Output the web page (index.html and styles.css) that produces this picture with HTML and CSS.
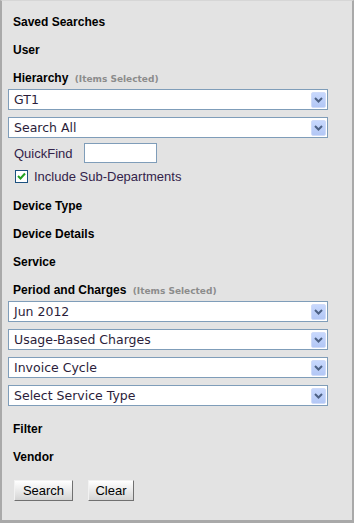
FILE: index.html
```html
<!DOCTYPE html>
<html lang="en">
<head>
    <meta charset="UTF-8">
    <title>Search Panel</title>
    <link rel="stylesheet" href="styles.css">
</head>
<body>
    <div class="panel">
        <div class="hd">Saved Searches</div>
        <div class="hd">User</div>
        <div class="hd">Hierarchy <span class="note">(Items Selected)</span></div>
        <div class="combo first"><span>GT1</span><span class="arrow"><svg width="9" height="6" viewBox="0 0 9 6"><path d="M1 1 L4.5 4.5 L8 1" fill="none" stroke="#4d6185" stroke-width="2"/></svg></span></div>
        <div class="combo"><span>Search All</span><span class="arrow"><svg width="9" height="6" viewBox="0 0 9 6"><path d="M1 1 L4.5 4.5 L8 1" fill="none" stroke="#4d6185" stroke-width="2"/></svg></span></div>
        <div class="quick">
            <label>QuickFind</label>
            <span class="textbox"></span>
        </div>
        <div class="check">
            <span class="box"><svg width="11" height="11" viewBox="0 0 11 11"><path d="M2 5 L4.5 7.5 L9 2.5" fill="none" stroke="#21a121" stroke-width="2"/></svg></span>
            <label>Include Sub-Departments</label>
        </div>
        <div class="hd gap">Device Type</div>
        <div class="hd">Device Details</div>
        <div class="hd">Service</div>
        <div class="hd">Period and Charges <span class="note">(Items Selected)</span></div>
        <div class="combo first"><span>Jun 2012</span><span class="arrow"><svg width="9" height="6" viewBox="0 0 9 6"><path d="M1 1 L4.5 4.5 L8 1" fill="none" stroke="#4d6185" stroke-width="2"/></svg></span></div>
        <div class="combo"><span>Usage-Based Charges</span><span class="arrow"><svg width="9" height="6" viewBox="0 0 9 6"><path d="M1 1 L4.5 4.5 L8 1" fill="none" stroke="#4d6185" stroke-width="2"/></svg></span></div>
        <div class="combo"><span>Invoice Cycle</span><span class="arrow"><svg width="9" height="6" viewBox="0 0 9 6"><path d="M1 1 L4.5 4.5 L8 1" fill="none" stroke="#4d6185" stroke-width="2"/></svg></span></div>
        <div class="combo"><span>Select Service Type</span><span class="arrow"><svg width="9" height="6" viewBox="0 0 9 6"><path d="M1 1 L4.5 4.5 L8 1" fill="none" stroke="#4d6185" stroke-width="2"/></svg></span></div>
        <div class="hd gap">Filter</div>
        <div class="hd">Vendor</div>
        <div class="buttons">
            <button class="btn search">Search</button>
            <button class="btn clear">Clear</button>
        </div>
    </div>
</body>
</html>
```

FILE: styles.css
```css
html, body {
    margin: 0;
    padding: 0;
}
body {
    font-family: "Liberation Sans", Arial, sans-serif;
    background-color: #e3e3e3;
}
.panel {
    box-sizing: border-box;
    width: 354px;
    height: 523px;
    background-color: #e3e3e3;
    border: 2px solid #a9a9a9;
    border-top: 1px solid #d6d6d6;
    border-bottom-width: 3px;
    padding: 13px 0 0 6px;
}
.hd {
    font-size: 12px;
    font-weight: bold;
    line-height: 16px;
    height: 16px;
    color: #000;
    padding-left: 5px;
    margin-top: 12px;
}
.hd:first-child {
    margin-top: 0;
}
.hd.gap {
    margin-top: 15px;
}
.note {
    font-family: "DejaVu Sans", Verdana, sans-serif;
    font-size: 9px;
    color: #8c8c8c;
    margin-left: 3px;
}
.combo {
    box-sizing: border-box;
    width: 320px;
    height: 21px;
    margin-top: 7px;
    background: #fff;
    border: 1px solid #7f9db9;
    display: flex;
    align-items: center;
    justify-content: space-between;
    padding: 0 1px 0 5px;
    font-family: "DejaVu Sans", Verdana, sans-serif;
    font-size: 12.5px;
    color: #2b1d3a;
}
.combo.first {
    margin-top: 3px;
}
.arrow {
    box-sizing: border-box;
    width: 15px;
    height: 16px;
    background: linear-gradient(#c8d8fd, #b3c7f5);
    border: 1px solid #cfdbf9;
    border-radius: 2px;
    display: flex;
    align-items: center;
    justify-content: center;
}
.quick {
    display: flex;
    align-items: center;
    margin-top: 5px;
    padding-left: 6px;
    height: 20px;
    font-size: 13px;
    color: #33234a;
}
.textbox {
    box-sizing: border-box;
    width: 73px;
    height: 20px;
    background: #fff;
    border: 1px solid #7f9db9;
    margin-left: 11px;
}
.check {
    display: flex;
    align-items: center;
    margin-top: 7px;
    padding-left: 7px;
    height: 13px;
    font-size: 13px;
    color: #33234a;
}
.box {
    box-sizing: border-box;
    width: 13px;
    height: 13px;
    background: #fff;
    border: 1px solid #1c5180;
    display: flex;
    align-items: center;
    justify-content: center;
    margin-right: 6px;
}
.buttons {
    display: flex;
    gap: 15px;
    margin-top: 15px;
    padding-left: 6px;
}
.btn {
    box-sizing: border-box;
    height: 21px;
    font-family: "Liberation Sans", Arial, sans-serif;
    font-size: 13px;
    color: #000;
    background: linear-gradient(#ffffff, #e6e6e6 60%, #d4d4d4);
    border: 1px solid;
    border-color: #f2f2f2 #707070 #707070 #f2f2f2;
    padding: 0;
}
.search {
    width: 59px;
}
.clear {
    width: 46px;
}
```
